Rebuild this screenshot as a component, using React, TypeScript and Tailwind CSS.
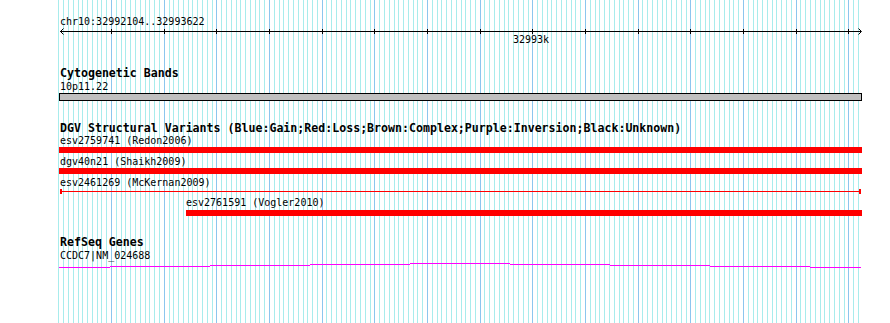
import React from "react";

const majors = Array.from({ length: 15 }, (_, k) => Math.round(111 + 52.66 * k));
const minors: number[] = [];
for (let j = 0; ; j++) {
  const x = 58.4 + (52.66 / 11) * j;
  if (x > 860) break;
  minors.push(Math.round(x));
}

function Grid() {
  return (
    <svg className="absolute inset-0" width={890} height={323} shapeRendering="crispEdges">
      {minors.map((x, i) => (
        <rect key={"m" + i} x={x} y={0} width={1} height={323} fill="#a8ecec" />
      ))}
      {majors.map((x, i) => (
        <rect key={"M" + i} x={x} y={0} width={1} height={323} fill="#8cc6ee" />
      ))}
    </svg>
  );
}

function Ruler() {
  // svg origin at page x=59, y=28 ; line at y=31
  const ox = 59;
  return (
    <svg width={803} height={7} className="block" shapeRendering="crispEdges">
      <rect x={60 - ox} y={3} width={801} height={1} fill="#000" />
      {majors.map((x, i) => (
        <rect key={i} x={x - ox} y={1} width={1} height={5} fill="#000" />
      ))}
      <path d={`M${60 - ox + 0.5} 3.5 L${63 - ox + 0.5} 0.5 M${60 - ox + 0.5} 3.5 L${63 - ox + 0.5} 6.5`} stroke="#000" strokeWidth={1} fill="none" shapeRendering="auto" />
      <path d={`M${861 - ox + 0.5} 3.5 L${858 - ox + 0.5} 0.5 M${861 - ox + 0.5} 3.5 L${858 - ox + 0.5} 6.5`} stroke="#000" strokeWidth={1} fill="none" shapeRendering="auto" />
    </svg>
  );
}

function Gene() {
  const segs: [number, number, number][] = [
    [59, 110, 267],
    [110, 210, 266],
    [210, 310, 265],
    [310, 410, 264],
    [410, 510, 263],
    [510, 610, 264],
    [610, 710, 265],
    [710, 810, 266],
    [810, 861, 267],
  ];
  const ox = 59;
  const oy = 262;
  return (
    <svg width={803} height={7} className="block" shapeRendering="crispEdges">
      {segs.map(([a, b, y], i) => (
        <rect key={i} x={a - ox} y={y - oy} width={b - a} height={1} fill="#ff00ff" />
      ))}
    </svg>
  );
}

export default function App() {
  return (
    <div className="relative w-[890px] h-[323px] overflow-hidden bg-white text-black font-['DejaVu_Sans_Mono',monospace] text-[10px]">
      <Grid />
      <div className="relative flex flex-col pl-[59px] pt-[16px]">
        <div className="h-[12px] leading-[12px] pl-[1px] whitespace-pre">chr10:32992104..32993622</div>
        <Ruler />
        <div className="-mt-[1px] h-[12px] leading-[12px] pl-[454px] whitespace-pre">32993k</div>

        <div className="mt-[21px] h-[13px] leading-[13px] pl-[1px] font-bold text-[11.6px] whitespace-pre">Cytogenetic Bands</div>
        <div className="mt-[1px] h-[12px] leading-[12px] pl-[1px] whitespace-pre">10p11.22</div>
        <div className="h-[8px] w-[803px] border border-black bg-[#c0c0c0]" />

        <div className="mt-[21px] h-[13px] leading-[13px] pl-[1px] font-bold text-[11.6px] whitespace-pre">DGV Structural Variants (Blue:Gain;Red:Loss;Brown:Complex;Purple:Inversion;Black:Unknown)</div>
        <div className="h-[12px] leading-[12px] pl-[1px] whitespace-pre">esv2759741 (Redon2006)</div>
        <div className="h-[6px] w-[803px] bg-[#ff0000]" />
        <div className="mt-[3px] h-[12px] leading-[12px] pl-[1px] whitespace-pre">dgv40n21 (Shaikh2009)</div>
        <div className="h-[6px] w-[803px] bg-[#ff0000]" />
        <div className="mt-[3px] h-[12px] leading-[12px] pl-[1px] whitespace-pre">esv2461269 (McKernan2009)</div>
        <div className="ml-[1px] flex h-[5px] w-[801px] items-center">
          <div className="h-[5px] w-[2px] bg-[#ff0000]" />
          <div className="h-[1px] flex-1 bg-[#ff0000]" />
          <div className="h-[5px] w-[2px] bg-[#ff0000]" />
        </div>
        <div className="mt-[3px] h-[12px] leading-[12px] pl-[127px] whitespace-pre">esv2761591 (Vogler2010)</div>
        <div className="mt-[1px] ml-[127px] h-[6px] w-[676px] bg-[#ff0000]" />

        <div className="mt-[20px] h-[13px] leading-[13px] pl-[1px] font-bold text-[11.6px] whitespace-pre">RefSeq Genes</div>
        <div className="mt-[1px] h-[12px] leading-[12px] pl-[1px] whitespace-pre">CCDC7|NM_024688</div>
        <Gene />
      </div>
    </div>
  );
}
